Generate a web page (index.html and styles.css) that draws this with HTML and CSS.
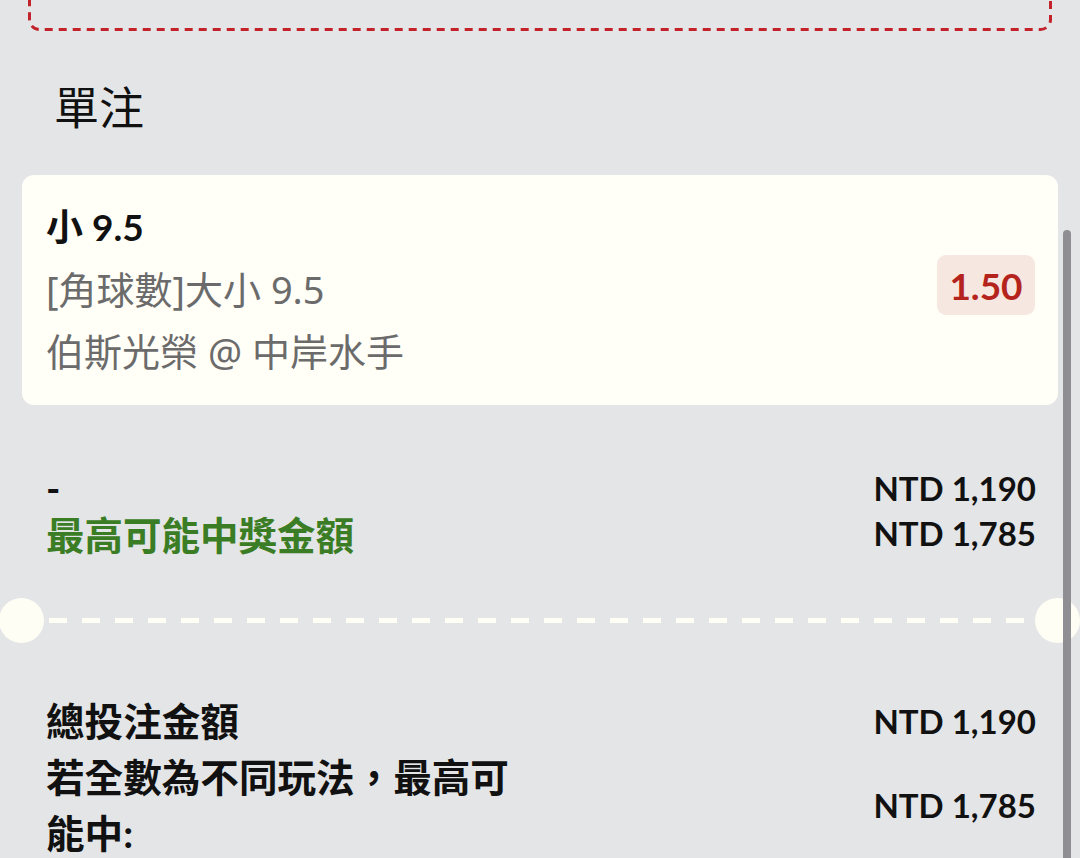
FILE: index.html
```html
<!DOCTYPE html>
<html lang="zh-Hant">
<head>
<meta charset="utf-8">
<title>單注</title>
<link rel="stylesheet" href="styles.css">
</head>
<body>
<div class="page">
  <div class="promo-box">
    <svg class="promo-frame" width="1024" height="131" viewBox="0 0 1024 131" aria-hidden="true">
      <rect x="1.5" y="1.5" width="1021" height="128" rx="10" ry="10" fill="none" stroke="#c3222b" stroke-width="3" stroke-dasharray="8 6"/>
    </svg>
  </div>
  <h2 class="section-title">單注</h2>
  <div class="bet-card">
    <div class="bet-info">
      <div class="bet-pick">小 9.5</div>
      <div class="bet-market">[角球數]大小 9.5</div>
      <div class="bet-match">伯斯光榮 @ 中岸水手</div>
    </div>
    <div class="odds">1.50</div>
  </div>
  <div class="stake">
    <div class="stake-row">
      <span class="stake-label">-</span>
      <span class="amount">NTD 1,190</span>
    </div>
    <div class="stake-row">
      <span class="stake-label win">最高可能中獎金額</span>
      <span class="amount">NTD 1,785</span>
    </div>
  </div>
  <div class="divider">
    <span class="notch"></span>
    <span class="dash-line"></span>
    <span class="notch"></span>
  </div>
  <div class="summary">
    <div class="summary-label">總投注金額</div>
    <div class="amount">NTD 1,190</div>
    <div class="summary-label">若全數為不同玩法，最高可能中:</div>
    <div class="amount">NTD 1,785</div>
  </div>
  <div class="scrollbar"></div>
</div>
</body>
</html>
```

FILE: styles.css
```css
html, body {
  margin: 0;
  padding: 0;
  height: 100%;
  overflow: hidden;
  background: #e4e5e7;
}
body {
  font-family: Lato, "Noto Sans CJK TC", sans-serif;
  color: #111111;
}
.page {
  position: relative;
  height: 858px;
  overflow: hidden;
}
.promo-box {
  height: 131px;
  margin: -100px 28px 0 28px;
}
.promo-frame {
  display: block;
}
.section-title {
  margin: 53px 0 0 54px;
  font-size: 45px;
  line-height: 48px;
  font-weight: 400;
}
.bet-card {
  margin: 43px 22px 0 22px;
  height: 230px;
  box-sizing: border-box;
  padding: 21px 23px 0 24px;
  background: #fffef7;
  border-radius: 12px;
  display: flex;
  align-items: flex-start;
  justify-content: space-between;
}
.bet-pick {
  font-size: 37px;
  line-height: 62px;
  font-weight: 700;
}
.bet-market, .bet-match {
  font-family: "Noto Sans", "Noto Sans CJK TC", sans-serif;
  font-size: 38px;
  line-height: 62px;
  color: #6b6b6b;
}
.odds {
  width: 98px;
  height: 60px;
  margin-top: 59px;
  display: flex;
  align-items: center;
  justify-content: center;
  background: #f6e7e1;
  border-radius: 9px;
  color: #b5241c;
  font-size: 37px;
  font-weight: 700;
}
.stake {
  margin: 60px 44px 0 46px;
}
.stake-row {
  display: flex;
  justify-content: space-between;
  align-items: center;
  height: 45px;
}
.stake-label {
  font-size: 38.5px;
  font-weight: 700;
}
.win {
  color: #3b7d24;
}
.amount {
  font-size: 33px;
  font-weight: 700;
  text-align: right;
}
.divider {
  margin: 42.5px 0 0 0;
  height: 45px;
  display: flex;
  align-items: center;
}
.notch {
  flex: none;
  width: 45px;
  height: 45px;
  border-radius: 50%;
  background: #fffef5;
}
.divider .notch:first-child {
  margin-left: -1px;
}
.dash-line {
  flex: 1;
  height: 5px;
  margin: 0 5px;
  background: repeating-linear-gradient(90deg, #fffef5 0 18px, transparent 18px 33px);
}
.summary {
  margin: 50px 44px 0 46px;
  display: grid;
  grid-template-columns: 475px 1fr;
  align-items: center;
}
.summary-label {
  font-size: 38.6px;
  font-weight: 700;
  line-height: 56px;
}
.scrollbar {
  position: absolute;
  left: 1063px;
  top: 230px;
  width: 8px;
  height: 700px;
  background: #8e8e93;
  border-radius: 4px;
}
```
